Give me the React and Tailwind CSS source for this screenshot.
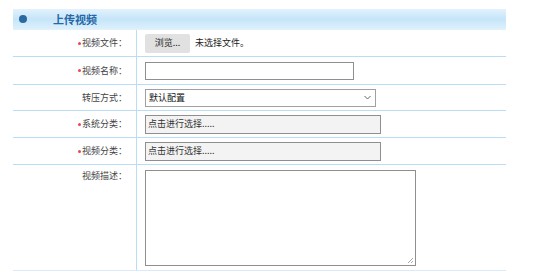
import React from "react";

const rows = [
  { label: "视频文件：", required: true, h: "h-[27px]", kind: "file" },
  { label: "视频名称：", required: true, h: "h-[28px]", kind: "text" },
  { label: "转压方式：", required: false, h: "h-[26px]", kind: "select" },
  { label: "系统分类：", required: true, h: "h-[27px]", kind: "picker" },
  { label: "视频分类：", required: true, h: "h-[27px]", kind: "picker" },
];

function Field({ kind }) {
  if (kind === "file") {
    return (
      <div className="flex items-center gap-[5px]">
        <span className="flex h-[19px] w-[45px] items-center justify-center rounded-[2px] bg-[#e1e1e1] text-[9px] text-[#222]">
          浏览...
        </span>
        <span className="text-[9px] text-[#222]">未选择文件。</span>
      </div>
    );
  }
  if (kind === "text") {
    return <div className="h-[18px] w-[209px] border border-[#8f8f8f] bg-white" />;
  }
  if (kind === "select") {
    return (
      <div className="flex h-[18px] w-[231px] items-center justify-between border border-[#a0a0a0] bg-white pl-[3px] pr-[4px]">
        <span className="text-[9px] text-[#111]">默认配置</span>
        <svg width="7" height="5" viewBox="0 0 7 5" fill="none">
          <path d="M0.5 1L3.5 4L6.5 1" stroke="#666" strokeWidth="1" />
        </svg>
      </div>
    );
  }
  return (
    <div className="flex h-[19px] w-[236px] items-center border border-[#8f8f8f] bg-[#f3f3f3] pl-[2px]">
      <span className="text-[9px] text-[#333]">点击进行选择.....</span>
    </div>
  );
}

export default function App() {
  return (
    <div className="h-[277px] w-[536px] bg-white pt-[9px] pl-[13px] font-['Noto_Sans_CJK_SC',sans-serif]">
      <div className="w-[493px]">
        <div className="flex h-[21px] items-center border-b border-[#e3f1fb] bg-gradient-to-b from-[#e3f2fd] via-[#c6e5f9] to-[#dcf0fc]">
          <span className="ml-[6px] h-[8px] w-[8px] rounded-full bg-[#2a6aa0]" />
          <span className="ml-[26px] text-[11px] font-bold leading-none text-[#2468a8]">上传视频</span>
        </div>
        {rows.map((r) => (
          <div key={r.label} className={`flex ${r.h} border-b border-[#b9ddf6]`}>
            <div className="flex w-[124px] shrink-0 items-center justify-end border-r border-[#b9ddf6] pr-[9px] text-[9px] text-[#444]">
              {r.required && <span className="mr-[1px] h-[3px] w-[3px] rounded-full bg-[#f0405a]" />}
              {r.label}
            </div>
            <div className="flex items-center pl-[8px]">
              <Field kind={r.kind} />
            </div>
          </div>
        ))}
        <div className="flex h-[106px] border-b border-[#d7ebfa]">
          <div className="flex w-[124px] shrink-0 justify-end border-r border-[#b9ddf6] pt-[4px] pr-[9px] text-[9px] text-[#444]">
            视频描述：
          </div>
          <div className="pl-[8px] pt-[5px]">
            <div className="relative h-[96px] w-[271px] border border-[#8f8f8f] bg-white">
              <svg className="absolute right-[1px] bottom-[1px]" width="7" height="7" viewBox="0 0 7 7">
                <path d="M6 1L1 6M6 4L4 6" stroke="#aaa" strokeWidth="1" />
              </svg>
            </div>
          </div>
        </div>
      </div>
    </div>
  );
}
